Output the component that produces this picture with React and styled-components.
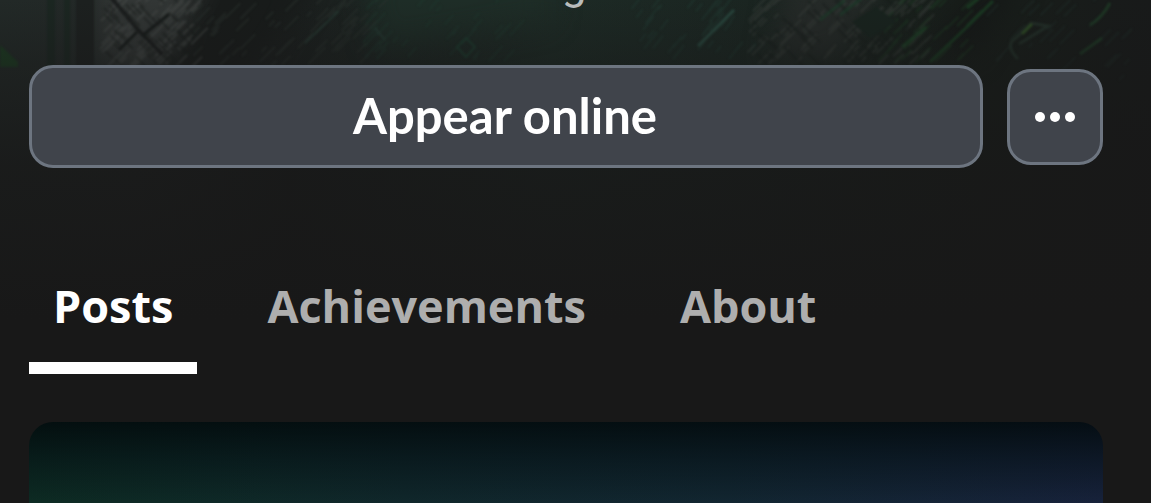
import React, { useState } from 'react';
import styled, { createGlobalStyle } from 'styled-components';

const GlobalStyle = createGlobalStyle`
  *, *::before, *::after { box-sizing: border-box; }
  body {
    margin: 0;
    background: #181818;
    color: #fff;
    font-family: "Open Sans", "Noto Sans", sans-serif;
  }
  button { font: inherit; color: inherit; cursor: pointer; }
`;

const Page = styled.main`
  position: relative;
  isolation: isolate;
  display: flex;
  flex-direction: column;
  min-height: 100vh;
  padding: 0 48px 0 29px;
  overflow: hidden;
`;

const Backdrop = styled.svg`
  position: absolute;
  inset: 0 0 auto;
  z-index: -1;
  width: 100%;
  height: 320px;
`;

const StatusLine = styled.p`
  display: flex;
  align-items: flex-end;
  justify-content: center;
  height: 10px;
  margin: 0;
  padding-left: 16px;
  color: #b9bcbb;
  font-family: Roboto, sans-serif;
  font-size: 44px;
  line-height: 52px;
`;

const Actions = styled.div`
  display: flex;
  align-items: center;
  gap: 24px;
  margin-top: 55px;
`;

const ActionButton = styled.button`
  display: flex;
  align-items: center;
  justify-content: center;
  flex: ${(p) => (p.$icon ? '0 0 96px' : '1')};
  height: ${(p) => (p.$icon ? '96px' : '103px')};
  padding: ${(p) => (p.$icon ? '0' : '0 2px 4px 0')};
  border: 3px solid #6d7580;
  border-radius: 24px;
  background: #40444b;
  font-family: Lato, sans-serif;
  font-size: 49px;
  font-weight: 700;
  line-height: 60px;
`;

const Tabs = styled.div`
  display: flex;
  gap: 46px;
  margin-top: 104px;
`;

const Tab = styled.button`
  padding: 0 24px 22px;
  border: 0;
  border-bottom: 12px solid ${(p) => (p.$active ? '#fff' : 'transparent')};
  background: none;
  color: ${(p) => (p.$active ? '#fff' : '#aeaeae')};
  font-size: 45px;
  font-weight: 700;
  line-height: 68px;
`;

const PostCard = styled.section`
  flex: 1;
  min-height: 81px;
  margin-top: 48px;
  border-radius: 24px 24px 0 0;
  background:
    linear-gradient(rgba(2, 10, 12, 0.85) 0%, rgba(3, 13, 17, 0.5) 45%, rgba(3, 13, 17, 0) 100%),
    linear-gradient(90deg, #0d2b23 0%, #10272b 35%, #122631 65%, #17223b 100%);
`;

const FADE = '#181818';

const TEXTURE = [
  { x: 96, y: -6, w: 100, h: 76, n: 80, angle: -45, color: '#4a4e4b', seed: 3 },
  { x: 96, y: -6, w: 100, h: 76, n: 50, angle: 45, color: '#171b1a', seed: 9 },
  { x: 190, y: 0, w: 190, h: 66, n: 60, angle: -45, color: '#2c3330', seed: 14 },
  { x: 360, y: -4, w: 150, h: 66, n: 40, angle: -48, color: '#1f3a30', seed: 22 },
  { x: 620, y: 0, w: 130, h: 60, n: 36, angle: -52, color: '#213c34', seed: 37 },
  { x: 745, y: -6, w: 180, h: 72, n: 110, angle: -45, color: '#3a403c', seed: 41 },
  { x: 750, y: -6, w: 160, h: 72, n: 60, angle: 45, color: '#161c19', seed: 53 },
  { x: 870, y: 0, w: 100, h: 64, n: 34, angle: -45, color: '#1d3b24', seed: 61 },
  { x: 980, y: 0, w: 150, h: 80, n: 26, angle: -45, color: '#202d2a', seed: 75 },
];

function strokesFor({ x, y, w, h, n, angle, seed }) {
  let s = seed;
  const next = () => {
    s = (s * 16807) % 2147483647;
    return s / 2147483647;
  };
  for (let i = 0; i < 6; i += 1) next();
  const rad = (angle * Math.PI) / 180;
  return Array.from({ length: n }, () => {
    const px = x + next() * w;
    const py = y + next() * h;
    const len = 6 + next() * 18;
    return `M${px.toFixed(1)} ${py.toFixed(1)}l${(Math.cos(rad) * len).toFixed(1)} ${(Math.sin(rad) * len).toFixed(1)}`;
  }).join('');
}

function CoverArt() {
  return (
    <Backdrop viewBox="0 0 1151 320" preserveAspectRatio="none" aria-hidden="true">
      <defs>
        <linearGradient id="base" x1="0" x2="1" y1="0" y2="0">
          <stop offset="0" stopColor="#222927" />
          <stop offset="0.12" stopColor="#232827" />
          <stop offset="0.25" stopColor="#1b1f1e" />
          <stop offset="0.48" stopColor="#1d2a25" />
          <stop offset="0.62" stopColor="#1b2622" />
          <stop offset="0.85" stopColor="#181e1a" />
          <stop offset="1" stopColor="#181a1a" />
        </linearGradient>
        <linearGradient id="fade" x1="0" x2="0" y1="0" y2="1">
          <stop offset="0" stopColor={FADE} stopOpacity="0" />
          <stop offset="0.2" stopColor={FADE} stopOpacity="0.4" />
          <stop offset="0.52" stopColor={FADE} stopOpacity="0.8" />
          <stop offset="1" stopColor={FADE} />
        </linearGradient>
        <filter id="soft" x="-5%" y="-20%" width="110%" height="140%" colorInterpolationFilters="sRGB">
          <feGaussianBlur stdDeviation="1" />
        </filter>
        <filter id="mist" x="-10%" y="-80%" width="120%" height="260%" colorInterpolationFilters="sRGB">
          <feGaussianBlur stdDeviation="14" />
        </filter>
      </defs>
      <rect width="1151" height="320" fill="url(#base)" />
      <g filter="url(#mist)">
        <path d="M100-30h110l-50 96h-60z" fill="#323635" />
        <path d="M360-30h190v50l-170 30z" fill="#1e2d27" />
        <path d="M210-30h110l-70 120h-90z" fill="#181b1a" />
        <path d="M790-30h100l-50 90h-70z" fill="#252a28" />
        <path d="M930 40l60-60h30l-50 80z" fill="#151817" />
      </g>
      <g filter="url(#soft)" fill="none">
        <path d="M47-5h8V75h-8zM64-5h6V75h-6z" fill="#1b2621" />
        <path d="M76-5h18v80H76z" fill="#1c201f" />
        <path d="M0 45l18 17v5H0z" fill="#1c3b22" />
        {TEXTURE.map((t) => (
          <path key={t.seed} d={strokesFor(t)} stroke={t.color} strokeWidth="2" strokeOpacity="0.5" />
        ))}
        <path d="M110-4l28 34 24 24" stroke="#151818" strokeWidth="4" strokeOpacity="0.8" />
        <path d="M142 36l27-22M119 50l18-18" stroke="#171b1a" strokeWidth="3" />
        <path d="M305 43l34-32M375 28l10 12" stroke="#263c34" strokeWidth="2" strokeOpacity="0.7" />
        <path d="M466 38l9 9-9 10-9-10z" stroke="#1d3a2e" strokeWidth="2" />
        <path d="M698 46l36-36" stroke="#28463d" strokeWidth="3" />
        <path d="M852 22l24-15 21 15-28 16z" fill="#18231e" />
        <path d="M820 20l25-20M840 15l22-17" stroke="#1b3d29" strokeWidth="3" strokeOpacity="0.6" />
        <path d="M930 62l38-36 25-25M902 47l24-20M967 8l12-10" stroke="#1b4425" strokeWidth="3" strokeOpacity="0.7" />
        <path d="M1018 59q-14-14-2-21l15-15 17 3-29 18" stroke="#26362d" strokeWidth="3" strokeOpacity="0.7" />
        <path d="M1022 34l10-10" stroke="#2d4a24" strokeWidth="3" />
        <path d="M1090 25q12-7 20-22M1080 54l22-16" stroke="#1f4128" strokeWidth="3" strokeOpacity="0.7" />
      </g>
      <rect width="1151" height="320" fill="url(#fade)" />
    </Backdrop>
  );
}

function MoreIcon() {
  return (
    <svg width="42" height="12" viewBox="0 0 42 12" fill="#fff" aria-hidden="true">
      <circle cx="6" cy="6" r="5" />
      <circle cx="21" cy="6" r="5" />
      <circle cx="36" cy="6" r="5" />
    </svg>
  );
}

const TAB_NAMES = ['Posts', 'Achievements', 'About'];

export default function App() {
  const [active, setActive] = useState('Posts');
  return (
    <>
      <GlobalStyle />
      <Page>
        <CoverArt />
        <StatusLine>g</StatusLine>
        <Actions>
          <ActionButton type="button">Appear online</ActionButton>
          <ActionButton type="button" $icon aria-label="More options">
            <MoreIcon />
          </ActionButton>
        </Actions>
        <Tabs role="tablist">
          {TAB_NAMES.map((name) => (
            <Tab
              key={name}
              type="button"
              role="tab"
              aria-selected={name === active}
              $active={name === active}
              onClick={() => setActive(name)}
            >
              {name}
            </Tab>
          ))}
        </Tabs>
        <PostCard aria-label={active} />
      </Page>
    </>
  );
}
